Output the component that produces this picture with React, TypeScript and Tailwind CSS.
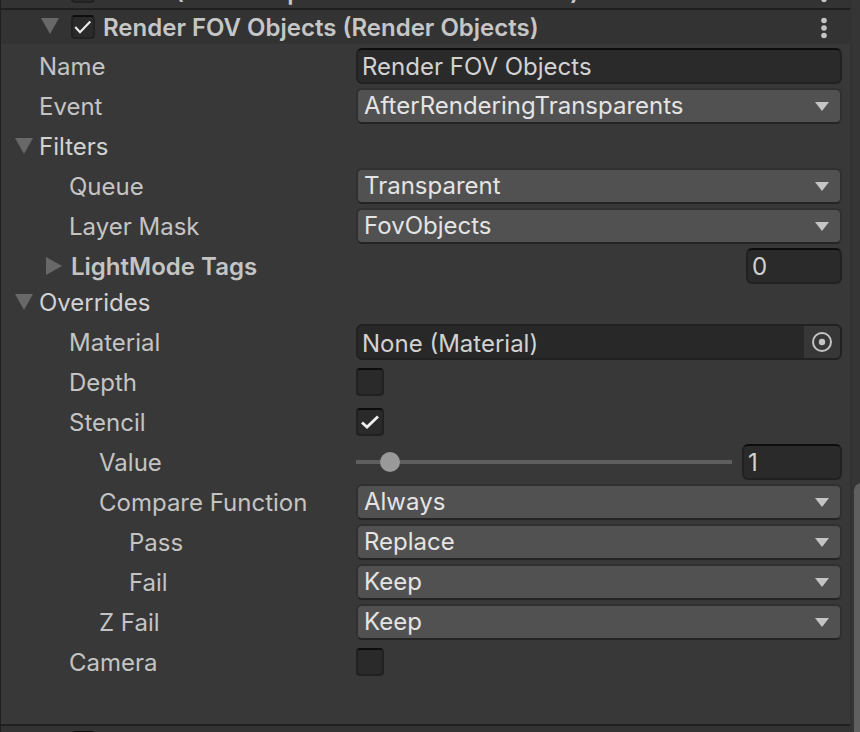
import { useState, type ReactNode } from "react";

function Fold({ open = true }: { open?: boolean }) {
  return (
    <svg viewBox="0 0 18 18" className="size-[18px] shrink-0 fill-[#686868]" aria-hidden="true">
      {open ? <path d="M0 1H18L9 17Z" /> : <path d="M1 0V18L17 9Z" />}
    </svg>
  );
}

function Check({ label, checked, small = false }: { label: string; checked: boolean; small?: boolean }) {
  const [on, setOn] = useState(checked);
  return (
    <span className={`relative block shrink-0 ${small ? "size-6" : "size-7"}`}>
      <input
        type="checkbox"
        aria-label={label}
        checked={on}
        onChange={() => setOn(!on)}
        className="block size-full appearance-none rounded border-2 border-[#212121] border-t-[#0d0d0d] bg-[#2a2a2a]"
      />
      {on && (
        <svg
          viewBox="0 0 28 28"
          className="pointer-events-none absolute inset-0 size-full fill-none stroke-[#eeeeee]"
          aria-hidden="true"
        >
          {small ? (
            <path d="M5 14L10.5 20L22.5 7.5" strokeWidth="2.4" />
          ) : (
            <path d="M6 14.5L11 19L22 8.5" strokeWidth="2.8" />
          )}
        </svg>
      )}
    </span>
  );
}

function Header({ title, checked }: { title: string; checked: boolean }) {
  return (
    <div className="flex h-[34px] shrink-0 items-center bg-[#333333] pr-[18px] pl-10">
      <button type="button" aria-label="Toggle section" className="mr-3 flex pb-0.5">
        <Fold />
      </button>
      <Check small label={title || "Enabled"} checked={checked} />
      <h2 className="ml-2 flex-1 pt-0.5 text-2xl leading-7 font-semibold whitespace-nowrap text-[#c6c6c6] [font-optical-sizing:none]">
        {title}
      </h2>
      <button type="button" aria-label="More options" className="flex">
        <svg viewBox="0 0 16 24" className="h-6 w-4 fill-[#c4c4c4]" aria-hidden="true">
          <circle cx="8" cy="5.5" r="2.8" />
          <circle cx="8" cy="13" r="2.8" />
          <circle cx="8" cy="20.5" r="2.8" />
        </svg>
      </button>
    </div>
  );
}

const indents = ["pl-[38px]", "pl-[68px]", "pl-[98px]", "pl-[128px]"];

function Row({ label, level = 0, id, children }: { label: string; level?: number; id?: string; children: ReactNode }) {
  return (
    <div className="flex h-9 items-center">
      <label htmlFor={id} className={`w-[355px] shrink-0 pt-0.5 ${indents[level]}`}>
        {label}
      </label>
      {children}
    </div>
  );
}

const field =
  "h-9 rounded-md border-2 border-[#212121] border-t-[#0d0d0d] bg-[#2a2a2a] px-1 text-[#d2d2d2] outline-none";

function Dropdown({ label, level, value }: { label: string; level?: number; value: string }) {
  const id = label.toLowerCase().replace(/ /g, "-");
  return (
    <Row label={label} level={level} id={id}>
      <div className="relative min-w-0 flex-1">
        <select
          id={id}
          className="block h-9 w-full appearance-none rounded-md border-2 border-[#303030] border-b-[#242424] bg-[#515151] pr-10 pl-1.5 text-[#e4e4e4]"
        >
          <option>{value}</option>
        </select>
        <svg
          viewBox="0 0 14 9"
          className="pointer-events-none absolute top-3.5 right-[13px] h-[9px] w-3.5 fill-[#c4c4c4]"
          aria-hidden="true"
        >
          <path d="M0 0H14L7 9Z" />
        </svg>
      </div>
    </Row>
  );
}

function CheckRow({ label, checked }: { label: string; checked: boolean }) {
  return (
    <Row label={label} level={1}>
      <Check label={label} checked={checked} />
    </Row>
  );
}

function Section({ title }: { title: string }) {
  return (
    <button type="button" className="flex h-9 items-center gap-1.5 pl-3.5 text-[#d2d2d2]">
      <Fold />
      <span className="pt-0.5">{title}</span>
    </button>
  );
}

export default function App() {
  const [name, setName] = useState("Render FOV Objects");
  const [tags, setTags] = useState("0");
  const [stencil, setStencil] = useState("1");

  return (
    <div className="flex h-screen overflow-hidden bg-[#383838] font-['Inter',sans-serif] text-2xl leading-7 text-[#c4c4c4]">
      <main className="flex min-w-0 flex-1 flex-col overflow-hidden border-l border-[#1f1f1f]">
        <div className="flex h-2 shrink-0 flex-col justify-end overflow-hidden">
          <Header title="SSAO (Screen Space Ambient Occlusion)" checked={false} />
        </div>
        <div className="h-0.5 shrink-0 bg-[#1f1f1f]" />
        <Header title="Render FOV Objects (Render Objects)" checked />

        <div className="flex shrink-0 flex-col gap-1 pt-1 pr-2 pb-11">
          <Row label="Name" id="name">
            <input id="name" value={name} onChange={(e) => setName(e.target.value)} className={`${field} min-w-0 flex-1`} />
          </Row>
          <Dropdown label="Event" value="AfterRenderingTransparents" />
          <Section title="Filters" />
          <Dropdown label="Queue" level={1} value="Transparent" />
          <Dropdown label="Layer Mask" level={1} value="FovObjects" />
          <div>
            <div className="flex h-9 items-center justify-between">
              <button
                type="button"
                className="flex items-center gap-2 pl-11 font-semibold [font-optical-sizing:none]"
              >
                <Fold open={false} />
                <span className="pt-0.5">LightMode Tags</span>
              </button>
              <input
                aria-label="LightMode Tags count"
                value={tags}
                onChange={(e) => setTags(e.target.value)}
                className={`${field} w-24`}
              />
            </div>
            <Section title="Overrides" />
          </div>
          <Row label="Material" level={1} id="material">
            <div className="flex h-9 min-w-0 flex-1 overflow-hidden rounded-md border-2 border-[#212121] bg-[#282828]">
              <input
                id="material"
                readOnly
                value="None (Material)"
                className="min-w-0 flex-1 bg-transparent px-1 pt-1 text-[#d2d2d2] outline-none"
              />
              <button type="button" aria-label="Select material" className="flex w-9 items-center justify-center bg-[#373737]">
                <svg viewBox="0 0 20 20" className="size-5" aria-hidden="true">
                  <circle cx="10" cy="10" r="9" fill="none" stroke="#c4c4c4" strokeWidth="2" />
                  <circle cx="10" cy="10" r="3.2" fill="#c4c4c4" />
                </svg>
              </button>
            </div>
          </Row>
          <CheckRow label="Depth" checked={false} />
          <CheckRow label="Stencil" checked />
          <Row label="Value" level={2} id="value">
            <input
              id="value"
              type="range"
              min="0"
              max="15"
              value={stencil}
              onChange={(e) => setStencil(e.target.value)}
              className="mr-2.5 h-5 min-w-0 flex-1 appearance-none bg-transparent [&::-webkit-slider-runnable-track]:h-1 [&::-webkit-slider-runnable-track]:bg-[#5e5e5e] [&::-webkit-slider-thumb]:-mt-2 [&::-webkit-slider-thumb]:size-5 [&::-webkit-slider-thumb]:appearance-none [&::-webkit-slider-thumb]:rounded-full [&::-webkit-slider-thumb]:bg-[#999999]"
            />
            <input
              aria-label="Stencil value"
              value={stencil}
              onChange={(e) => setStencil(e.target.value)}
              className={`${field} w-[100px]`}
            />
          </Row>
          <Dropdown label="Compare Function" level={2} value="Always" />
          <Dropdown label="Pass" level={3} value="Replace" />
          <Dropdown label="Fail" level={3} value="Keep" />
          <Dropdown label="Z Fail" level={2} value="Keep" />
          <CheckRow label="Camera" checked={false} />
        </div>

        <div className="h-0.5 shrink-0 bg-[#1f1f1f]" />
        <Header title="" checked={false} />
      </main>
      <aside className="flex w-2.5 shrink-0 flex-col overflow-hidden border-l-2 border-[#323232] bg-[#353535] pl-0.5">
        <div className="h-[483px] shrink-0" />
        <div className="w-5 flex-1 rounded-tl-lg bg-[#5f5f5f]" />
      </aside>
    </div>
  );
}
